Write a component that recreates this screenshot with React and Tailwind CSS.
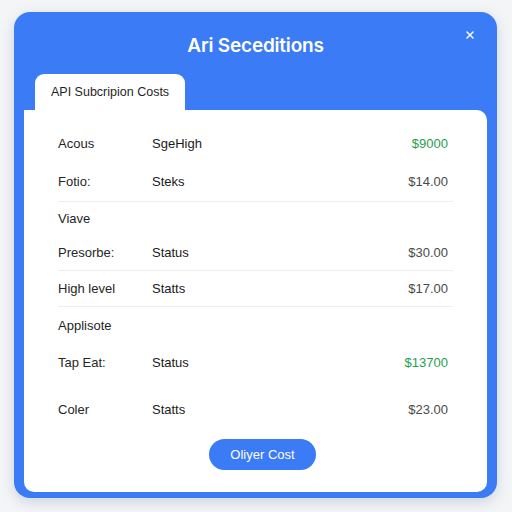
import React from 'react';
import { X } from 'lucide-react';

const rows = [
  { type: 'row', h: 38, label: 'Acous', status: 'SgeHigh', amount: '$9000', green: true },
  { type: 'row', h: 38, label: 'Fotio:', status: 'Steks', amount: '$14.00' },
  { type: 'divider' },
  { type: 'head', h: 34, label: 'Viave' },
  { type: 'row', h: 34, label: 'Presorbe:', status: 'Status', amount: '$30.00' },
  { type: 'divider' },
  { type: 'row', h: 35, label: 'High level', status: 'Statts', amount: '$17.00' },
  { type: 'divider' },
  { type: 'head', h: 38, label: 'Applisote' },
  { type: 'row', h: 36, label: 'Tap Eat:', status: 'Status', amount: '$13700', green: true },
  { type: 'row', h: 58, label: 'Coler', status: 'Statts', amount: '$23.00' },
];

export default function App() {
  return (
    <div className="w-[512px] h-[512px] bg-[#f4f5f7] p-[12px_15px_14px_14px] font-['Liberation_Sans','Inter',sans-serif]">
      <div className="h-full rounded-[16px] bg-[#3b7bf5] shadow-[0_4px_14px_rgba(30,60,120,0.18)] flex flex-col px-[10px] pb-[6px]">
        {/* header */}
        <div className="relative h-[63px] flex items-center justify-center">
          <h1 className="text-white text-[19px] font-semibold tracking-[-0.2px] pt-[7px] font-['Inter',sans-serif]">Ari Seceditions</h1>
          <button className="absolute right-[11px] top-[17px] text-white">
            <X size={12} strokeWidth={2.8} />
          </button>
        </div>

        {/* tab */}
        <div className="flex pl-[11px]">
          <div className="bg-white rounded-t-[9px] h-[36px] px-[16px] flex items-center">
            <span className="text-[12.5px] text-[#1f1f1f] pt-[1px]">API Subcripion Costs</span>
          </div>
        </div>

        {/* card */}
        <div className="flex-1 bg-white rounded-[10px] rounded-tl-none pt-[15px] px-[34px] pb-[22px] flex flex-col">
          {rows.map((r, i) => {
            if (r.type === 'divider') {
              return <div key={i} className="h-px bg-[#eceef1]" />;
            }
            if (r.type === 'head') {
              return (
                <div key={i} style={{ height: r.h }} className="flex items-center text-[13px] text-[#1f1f1f]">
                  {r.label}
                </div>
              );
            }
            return (
              <div key={i} style={{ height: r.h }} className="flex items-center text-[13px] pr-[5px]">
                <span className="w-[94px] text-[#262626]">{r.label}</span>
                <span className="flex-1 text-[#1a1a1a]">{r.status}</span>
                <span className={r.green ? 'text-[#1fa04f]' : 'text-[#4a4a4a]'}>{r.amount}</span>
              </div>
            );
          })}
          <div className="flex justify-center pl-[14px]">
            <button className="w-[107px] h-[31px] rounded-full bg-[#3b7bf5] text-white text-[13px]">
              Oliyer Cost
            </button>
          </div>
        </div>
      </div>
    </div>
  );
}
